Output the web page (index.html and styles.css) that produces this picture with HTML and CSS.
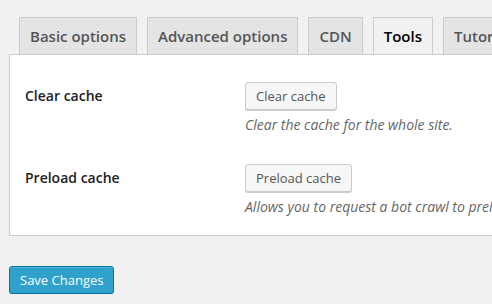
FILE: index.html
```html
<!DOCTYPE html>
<html lang="en">
<head>
  <meta charset="UTF-8">
  <title>Tools</title>
  <link rel="stylesheet" href="styles.css">
</head>
<body>
  <div class="wrap">
    <div class="tabs">
      <a class="tab">Basic options</a>
      <a class="tab">Advanced options</a>
      <a class="tab">CDN</a>
      <a class="tab active">Tools</a>
      <a class="tab">Tutorials</a>
    </div>
    <div class="panel">
      <table class="form-table">
        <tr>
          <th>Clear cache</th>
          <td>
            <button class="button">Clear cache</button>
            <p class="description">Clear the cache for the whole site.</p>
          </td>
        </tr>
        <tr>
          <th>Preload cache</th>
          <td>
            <button class="button">Preload cache</button>
            <p class="description">Allows you to request a bot crawl to preload the cache.</p>
          </td>
        </tr>
      </table>
    </div>
    <p class="submit">
      <button class="button button-primary">Save Changes</button>
    </p>
  </div>
</body>
</html>
```

FILE: styles.css
```css
html, body {
  margin: 0;
  padding: 0;
  overflow: hidden;
}

body {
  background-color: #f1f1f1;
  font-family: "Open Sans", "Liberation Sans", sans-serif;
  color: #444;
}

.wrap {
  padding: 17px 0 0 9px;
  width: 640px;
}

.tabs {
  display: flex;
  gap: 10px;
  padding-left: 10px;
  white-space: nowrap;
}
.tab {
  display: block;
  padding: 6px 10px;
  font-size: 15px;
  line-height: 24px;
  font-weight: 600;
  color: #555;
  background-color: #e4e4e4;
  border: 1px solid #ccc;
  border-bottom: none;
}
.tab.active {
  background-color: #f1f1f1;
  color: #000;
}

.panel {
  background-color: #fff;
  border: 1px solid #ccc;
  padding: 12px 15px 4px;
}

.form-table {
  border-collapse: collapse;
}
.form-table th {
  width: 200px;
  padding: 20px 10px 20px 0;
  text-align: left;
  vertical-align: top;
  font-size: 14px;
  line-height: 18px;
  font-weight: 600;
  color: #222;
}
.form-table td {
  padding: 15px 10px;
  vertical-align: top;
}

.button {
  display: block;
  height: 28px;
  padding: 0 10px 1px;
  font-family: inherit;
  font-size: 13px;
  line-height: 26px;
  color: #555;
  background-color: #f7f7f7;
  border: 1px solid #ccc;
  border-radius: 3px;
  box-shadow: 0 1px 0 #ccc;
  cursor: pointer;
  white-space: nowrap;
}

.description {
  margin: 6px 0 0;
  font-size: 14px;
  line-height: 18px;
  font-style: italic;
  color: #666;
  white-space: nowrap;
}

.submit {
  margin: 30px 0 0;
  padding: 0;
}
.button-primary {
  background-color: #2ea2cc;
  border-color: #0074a2;
  color: #fff;
  box-shadow: inset 0 1px 0 rgba(120, 200, 230, 0.5), 0 1px 0 rgba(0, 0, 0, 0.15);
}
```
